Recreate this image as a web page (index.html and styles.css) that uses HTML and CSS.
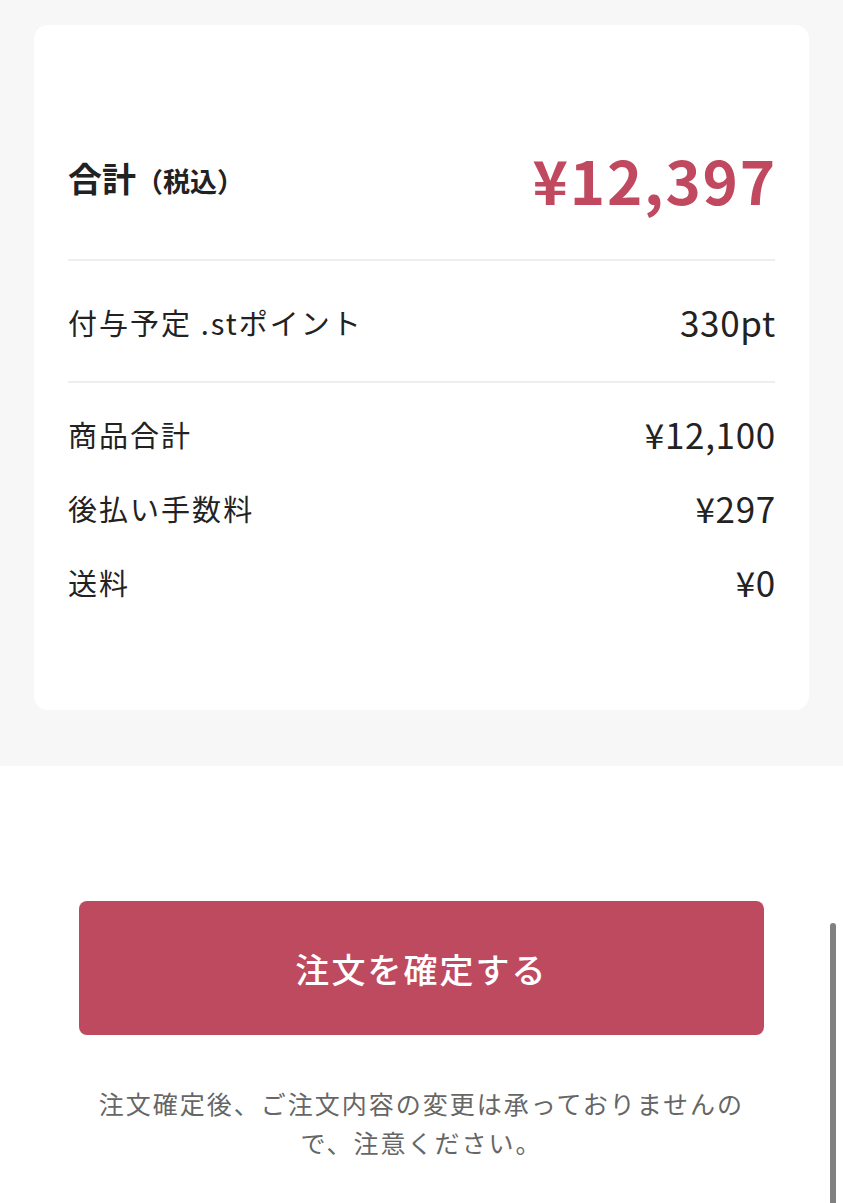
FILE: index.html
```html
<!DOCTYPE html>
<html lang="ja">
<head>
<meta charset="utf-8">
<link rel="stylesheet" href="styles.css">
</head>
<body>
<section class="summary">
  <div class="card">
    <div class="total-row">
      <div class="total-label">合計<span class="tax">（税込）</span></div>
      <div class="total-price">¥12,397</div>
    </div>
    <div class="points-row">
      <span class="label">付与予定 .stポイント</span>
      <span class="value">330pt</span>
    </div>
    <div class="lines">
      <div class="line"><span class="label">商品合計</span><span class="value">¥12,100</span></div>
      <div class="line"><span class="label">後払い手数料</span><span class="value">¥297</span></div>
      <div class="line"><span class="label">送料</span><span class="value">¥0</span></div>
    </div>
  </div>
</section>
<section class="actions">
  <button class="confirm">注文を確定する</button>
  <p class="note">注文確定後、ご注文内容の変更は承っておりませんので、注意ください。</p>
</section>
<div class="scrollbar"></div>
</body>
</html>
```

FILE: styles.css
```css
* { box-sizing: border-box; }
html, body { margin: 0; padding: 0; }
body {
  font-family: "Noto Sans CJK JP", "Noto Sans", sans-serif;
  color: #222;
  background: #fff;
  letter-spacing: 0.06em;
}
.summary {
  background: #f7f7f7;
  padding: 25px 34px 56px;
}
.card {
  background: #fff;
  border-radius: 14px;
  padding: 0 34px 108px;
}
.total-row {
  display: flex;
  justify-content: space-between;
  align-items: center;
  padding: 114px 0 40px;
  border-bottom: 2px solid #eeeeee;
}
.total-label {
  font-size: 34px;
  font-weight: 700;
  line-height: 44px;
  letter-spacing: 0;
  color: #222;
}
.tax {
  font-size: 27px;
  letter-spacing: 0;
}
.total-price {
  font-size: 60px;
  font-weight: 700;
  line-height: 80px;
  color: #c0485f;
  letter-spacing: 0.03em;
  margin-right: -2px;
}
.points-row {
  display: flex;
  justify-content: space-between;
  align-items: center;
  line-height: 40px;
  padding: 41px 0 39px;
  border-bottom: 2px solid #eeeeee;
}
.label {
  font-size: 29px;
  letter-spacing: 0.07em;
}
.value {
  font-size: 35px;
  letter-spacing: 0.02em;
  margin-right: -1px;
}
.lines {
  display: flex;
  flex-direction: column;
  gap: 34px;
  padding-top: 31px;
}
.line {
  display: flex;
  justify-content: space-between;
  align-items: center;
  line-height: 40px;
}
.actions {
  padding: 135px 79px 40px;
  display: flex;
  flex-direction: column;
  align-items: center;
}
.confirm {
  width: 100%;
  height: 134px;
  border: none;
  border-radius: 8px;
  background: #be4a60;
  color: #fff;
  font-family: inherit;
  font-size: 34px;
  font-weight: 500;
  letter-spacing: 0.06em;
  padding: 0;
}
.note {
  margin: 49px 0 0;
  max-width: 670px;
  text-align: center;
  font-size: 25px;
  line-height: 39px;
  color: #666;
  letter-spacing: 0.08em;
}
.scrollbar {
  position: fixed;
  right: 7px;
  top: 923px;
  bottom: -10px;
  width: 6px;
  border-radius: 3px;
  background: #808080;
}
```
